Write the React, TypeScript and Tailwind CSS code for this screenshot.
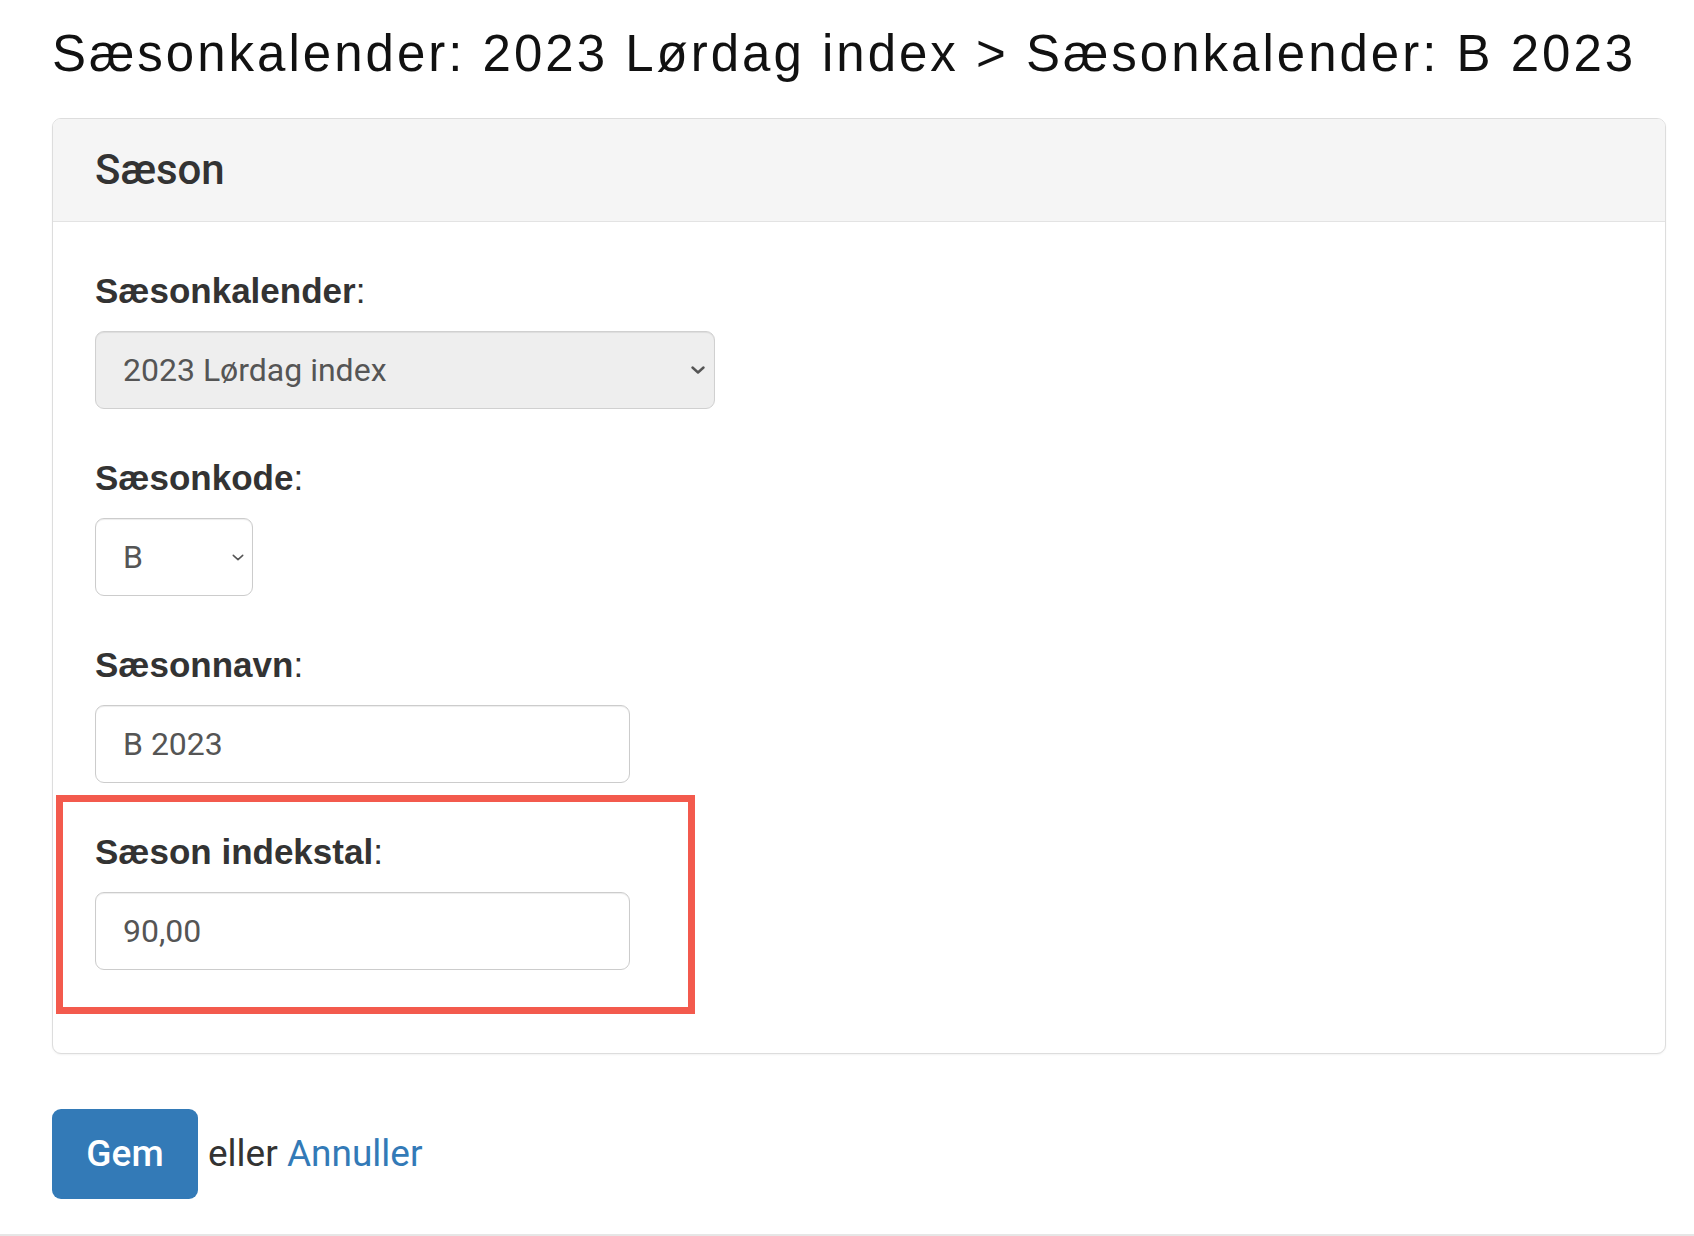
import type { FC, ReactNode } from "react";

const Chevron: FC<{ className: string; stroke: number }> = ({ className, stroke }) => (
  <svg viewBox="0 0 14 8" className={className} fill="none">
    <polyline
      points="1.5,1.5 7,6.5 12.5,1.5"
      stroke="#555"
      strokeWidth={stroke}
      strokeLinecap="round"
      strokeLinejoin="round"
    />
  </svg>
);

const Field: FC<{ label: string; children: ReactNode }> = ({ label, children }) => (
  <div className="flex flex-col">
    <label
      className="mb-[20px] text-[35px] leading-[40px] text-[#333]"
      style={{ fontFamily: "'Liberation Sans', Arial, sans-serif" }}
    >
      <span className="font-bold">{label}</span>:
    </label>
    {children}
  </div>
);

export default function App() {
  return (
    <div
      className="box-border flex h-[1236px] flex-col border-b-2 border-[#e6e6e6] bg-white pl-[52px] pt-[28px]"
      style={{ fontFamily: "Roboto, 'Liberation Sans', sans-serif" }}
    >
      <h1
        className="text-[51px] font-normal leading-[51px] tracking-[3px] text-[#111]"
        style={{ fontFamily: "'Liberation Sans', Arial, sans-serif" }}
      >
        Sæsonkalender: 2023 Lørdag index &gt; Sæsonkalender: B 2023
      </h1>

      <div className="mt-[39px] w-[1614px] rounded-[9px] border border-[#ddd] bg-white shadow-[0_1px_2px_rgba(0,0,0,0.05)]">
        <div className="rounded-t-[8px] border-b border-[#e3e3e3] bg-[#f5f5f5] px-[42px] py-[29px]">
          <h3 className="text-[42px] font-medium leading-[44px] text-[#333]">Sæson</h3>
        </div>

        <div className="flex flex-col gap-[49px] px-[42px] pb-[83px] pt-[49px]">
          <Field label="Sæsonkalender">
            <div className="relative w-[620px]">
              <select
                disabled
                defaultValue="2023"
                className="box-border h-[78px] w-full appearance-none rounded-[9px] border border-[#d0d0d0] bg-[#eee] pl-[27px] text-[32px] text-[#555] opacity-100 shadow-[inset_0_1px_1px_rgba(0,0,0,0.075)]"
              >
                <option value="2023">2023 Lørdag index</option>
              </select>
              <Chevron className="pointer-events-none absolute right-[10px] top-[35px] h-[8px] w-[14px]" stroke={2.4} />
            </div>
          </Field>

          <Field label="Sæsonkode">
            <div className="relative w-[158px]">
              <select
                defaultValue="B"
                className="box-border h-[78px] w-full appearance-none rounded-[9px] border border-[#ccc] bg-white pl-[27px] text-[32px] text-[#555] shadow-[inset_0_1px_1px_rgba(0,0,0,0.075)]"
              >
                <option value="A">A</option>
                <option value="B">B</option>
                <option value="C">C</option>
              </select>
              <Chevron className="pointer-events-none absolute right-[9px] top-[36px] h-[7px] w-[12px]" stroke={1.8} />
            </div>
          </Field>

          <Field label="Sæsonnavn">
            <input
              defaultValue="B 2023"
              className="box-border h-[78px] w-[535px] rounded-[9px] border border-[#ccc] bg-white pl-[27px] text-[32px] text-[#555] shadow-[inset_0_1px_1px_rgba(0,0,0,0.075)] outline-none"
            />
          </Field>

          <div className="relative">
            <Field label="Sæson indekstal">
              <input
                defaultValue="90,00"
                className="box-border h-[78px] w-[535px] rounded-[9px] border border-[#ccc] bg-white pl-[27px] text-[32px] text-[#555] shadow-[inset_0_1px_1px_rgba(0,0,0,0.075)] outline-none"
              />
            </Field>
            <div className="pointer-events-none absolute left-[-39px] top-[-37px] h-[219px] w-[639px] border-[7px] border-[#f35a4d]" />
          </div>
        </div>
      </div>

      <div className="mt-[55px] flex items-center">
        <button className="h-[90px] w-[146px] rounded-[9px] bg-[#337ab7] text-[37px] font-medium text-white">
          Gem
        </button>
        <span className="ml-[10px] text-[37px] text-[#333]">
          eller <a className="text-[#337ab7]">Annuller</a>
        </span>
      </div>
    </div>
  );
}
